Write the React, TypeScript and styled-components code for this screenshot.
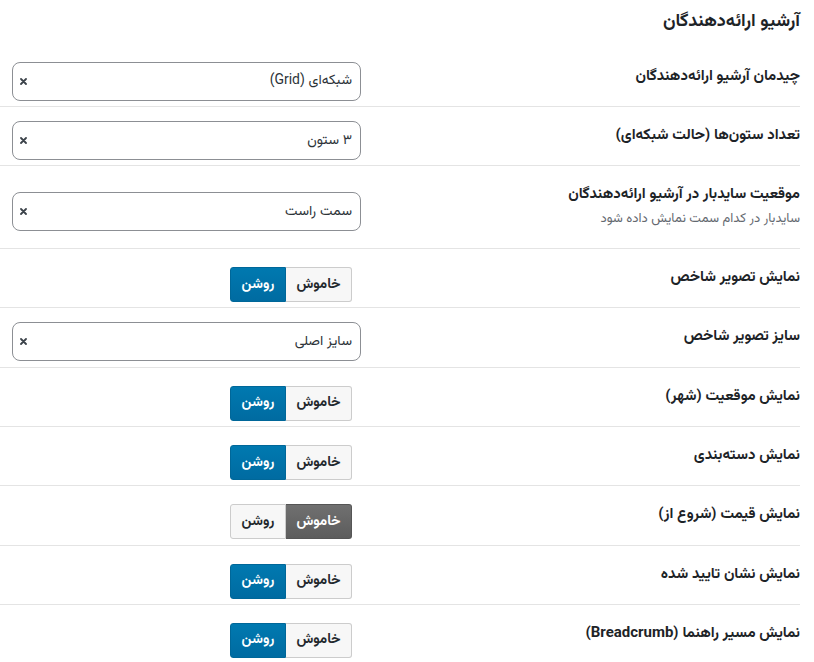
import React from "react";
import styled, { createGlobalStyle } from "styled-components";

const Global = createGlobalStyle`
  html, body { margin: 0; padding: 0; background: #fff; }
  body {
    font-family: "Vazirmatn", "Noto Sans Arabic", "DejaVu Sans", sans-serif;
    color: #1d2327;
  }
`;

const Page = styled.div`
  direction: rtl;
  width: 800px;
  box-sizing: border-box;
`;

const Heading = styled.h2`
  margin: 0;
  height: 47.75px;
  display: flex;
  align-items: center;
  padding-bottom: 3px;
  box-sizing: border-box;
  font-size: 18px;
  font-weight: 700;
  color: #1d2327;
`;

const Row = styled.div`
  display: grid;
  grid-template-columns: 1fr 372px;
  border-bottom: 1px solid #e4e4e4;
`;

const LabelCell = styled.div`
  padding: 20px 0;
  text-align: right;
`;

const Label = styled.div`
  font-size: 15px;
  line-height: 18.3px;
  font-weight: 700;
  color: #1d2327;
`;

const Hint = styled.div`
  margin-top: 6.5px;
  font-size: 13px;
  line-height: 16.9px;
  color: #646970;
`;

const FieldCell = styled.div`
  padding: 14px 11px 5px 12px;
  display: flex;
  align-items: center;
  justify-content: flex-start;
`;

const SelectBox = styled.div`
  flex: 1;
  height: 39px;
  box-sizing: border-box;
  border: 1px solid #8c8f94;
  border-radius: 8px;
  display: flex;
  align-items: center;
  justify-content: space-between;
  padding: 0 8px 0 7px;
  font-size: 14px;
  color: #2c3338;
  background: #fff;
`;

const ClearMark = styled.svg`
  width: 7px;
  height: 7px;
  flex: none;
`;

const Toggle = styled.div`
  display: flex;
  margin: 4px 9px 0 0;
  height: 35px;
`;

const Segment = styled.div<{ $active: boolean; $tone: "on" | "off"; $side: "right" | "left" }>`
  box-sizing: border-box;
  height: 35px;
  display: flex;
  align-items: center;
  justify-content: center;
  font-size: 14px;
  font-weight: 700;
  padding: 0 8px;
  width: ${(p) => (p.$tone === "off" ? "66px" : "56px")};
  border: 1px solid ${(p) => (p.$active ? (p.$tone === "on" ? "#006799" : "#555") : "#ccc")};
  border-radius: ${(p) => (p.$side === "right" ? "0 3px 3px 0" : "3px 0 0 3px")};
  ${(p) => (p.$side === "right" ? "border-left: none;" : "")}
  color: ${(p) => (p.$active ? "#fff" : "#23282d")};
  background: ${(p) =>
    p.$active
      ? p.$tone === "on"
        ? "linear-gradient(#0079b0, #006ba1)"
        : "linear-gradient(#707070, #5c5c5c)"
      : "#f7f7f7"};
`;

type Field =
  | { kind: "select"; value: string }
  | { kind: "toggle"; on: boolean };

type Setting = { label: string; hint?: string; field: Field };

const settings: Setting[] = [
  { label: "چیدمان آرشیو ارائه‌دهندگان", field: { kind: "select", value: "شبکه‌ای (Grid)" } },
  { label: "تعداد ستون‌ها (حالت شبکه‌ای)", field: { kind: "select", value: "۳ ستون" } },
  {
    label: "موقعیت سایدبار در آرشیو ارائه‌دهندگان",
    hint: "سایدبار در کدام سمت نمایش داده شود",
    field: { kind: "select", value: "سمت راست" },
  },
  { label: "نمایش تصویر شاخص", field: { kind: "toggle", on: true } },
  { label: "سایز تصویر شاخص", field: { kind: "select", value: "سایز اصلی" } },
  { label: "نمایش موقعیت (شهر)", field: { kind: "toggle", on: true } },
  { label: "نمایش دسته‌بندی", field: { kind: "toggle", on: true } },
  { label: "نمایش قیمت (شروع از)", field: { kind: "toggle", on: false } },
  { label: "نمایش نشان تایید شده", field: { kind: "toggle", on: true } },
  { label: "نمایش مسیر راهنما (Breadcrumb)", field: { kind: "toggle", on: true } },
];

function Select({ value }: { value: string }) {
  return (
    <SelectBox>
      <span>{value}</span>
      <ClearMark viewBox="0 0 7 7">
        <path d="M1 1L6 6M6 1L1 6" stroke="#3c434a" strokeWidth="1.8" strokeLinecap="round" />
      </ClearMark>
    </SelectBox>
  );
}

function OnOff({ on }: { on: boolean }) {
  return (
    <Toggle>
      <Segment $side="right" $tone="off" $active={!on}>خاموش</Segment>
      <Segment $side="left" $tone="on" $active={on}>روشن</Segment>
    </Toggle>
  );
}

export default function App() {
  return (
    <>
      <Global />
      <Page>
        <Heading>آرشیو ارائه‌دهندگان</Heading>
        {settings.map((s) => (
          <Row key={s.label}>
            <LabelCell>
              <Label>{s.label}</Label>
              {s.hint && <Hint>{s.hint}</Hint>}
            </LabelCell>
            <FieldCell>
              {s.field.kind === "select" ? <Select value={s.field.value} /> : <OnOff on={s.field.on} />}
            </FieldCell>
          </Row>
        ))}
      </Page>
    </>
  );
}
